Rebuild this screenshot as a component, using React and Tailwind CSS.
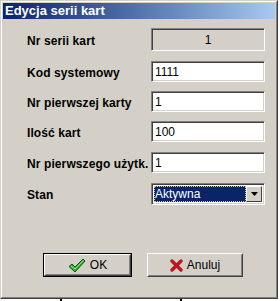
import React from "react";

const sunken =
  "border border-t-[#808080] border-l-[#808080] border-b-white border-r-white shadow-[inset_1px_1px_0_#404040,inset_-1px_-1px_0_#d4d0c8]";

function Row({ label, children, className = "" }) {
  return (
    <div className={`flex items-center ${className}`}>
      <div className="w-[148px] shrink-0 pl-[24px] pt-[2px] text-[12px] font-bold tracking-[0.1px] whitespace-nowrap text-black leading-none">
        {label}
      </div>
      {children}
    </div>
  );
}

function Field({ value }) {
  return (
    <div className={`w-[114px] h-[21px] bg-white ${sunken} flex items-center pl-[3px] text-[12px] text-black`}>
      {value}
    </div>
  );
}

function CheckIcon() {
  return (
    <svg width="18" height="15" viewBox="0 0 18 15">
      <path d="M1 8.5 L4 6 L7 9 L15 1 L17 3 L7 14 Z" fill="#2fae2f" stroke="#0d5a0d" strokeWidth="1" strokeLinejoin="round" />
      <path d="M3 8 L7 11 L15.5 2.5" fill="none" stroke="#8fe38f" strokeWidth="1" />
    </svg>
  );
}

function CrossIcon() {
  return (
    <svg width="13" height="13" viewBox="0 0 13 13">
      <path d="M2 2 L11 11 M11 2 L2 11" stroke="#c0141a" strokeWidth="3.4" strokeLinecap="round" />
    </svg>
  );
}

function Button({ children, isDefault, width }) {
  return (
    <div className={`${width} h-[24px] flex ${isDefault ? "border border-black" : ""}`}>
      <div className="flex-1 border border-t-white border-l-white border-b-[#404040] border-r-[#404040] flex">
        <div className="flex-1 border border-t-[#d4d0c8] border-l-[#d4d0c8] border-b-[#808080] border-r-[#808080] flex items-center justify-center gap-[4px] text-[12px] text-black">
          {children}
        </div>
      </div>
    </div>
  );
}

export default function App() {
  return (
    <div
      className="w-[280px] h-[301px] bg-white flex flex-col overflow-hidden"
      style={{ fontFamily: '"Liberation Sans", Arial, sans-serif' }}
    >
      <div className="flex">
        <div className="w-[278px] h-[299px] border border-t-[#d4d0c8] border-l-[#d4d0c8] border-b-[#404040] border-r-[#404040] bg-[#d4d0c8]">
          <div className="h-full border border-t-white border-l-white border-b-[#808080] border-r-[#808080] p-[1px] flex flex-col">
            <div className="h-[16px] bg-gradient-to-r from-[#0a246a] to-[#a6caf0] flex items-center pl-[2px] text-white font-bold text-[13px]">
              Edycja serii kart
            </div>

            <Row label="Nr serii kart" className="mt-[9px]">
              <div className={`w-[114px] h-[23px] bg-[#d4d0c8] ${sunken} flex items-center justify-center text-[12px] text-black`}>
                1
              </div>
            </Row>
            <Row label="Kod systemowy" className="mt-[10px]">
              <Field value="1111" />
            </Row>
            <Row label="Nr pierwszej karty" className="mt-[9px]">
              <Field value="1" />
            </Row>
            <Row label="Ilość kart" className="mt-[9px]">
              <Field value="100" />
            </Row>
            <Row label="Nr pierwszego użytk." className="mt-[10px]">
              <Field value="1" />
            </Row>
            <Row label="Stan" className="mt-[10px]">
              <div className={`w-[114px] h-[22px] bg-white ${sunken} flex items-center p-[2px]`}>
                <div className="flex-1 h-full bg-[#0a246a] outline-1 outline-dotted outline-[#d4c88a] -outline-offset-1 flex items-center pl-[1px] text-white text-[12px]">
                  Aktywna
                </div>
                <div className="w-[16px] h-full bg-[#d4d0c8] border border-t-white border-l-white border-b-[#404040] border-r-[#404040] flex items-center justify-center">
                  <svg width="7" height="4" viewBox="0 0 7 4">
                    <path d="M0 0 H7 L3.5 4 Z" fill="#000" />
                  </svg>
                </div>
              </div>
            </Row>

            <div className="flex mt-[48px] pl-[40px] gap-[15px]">
              <Button isDefault width="w-[89px]">
                <CheckIcon />
                <span>OK</span>
              </Button>
              <Button width="w-[96px]">
                <CrossIcon />
                <span>Anuluj</span>
              </Button>
            </div>
          </div>
        </div>
        <div className="w-[2px] bg-white" />
      </div>
      <div className="h-[2px] flex">
        <div className="w-[60px]" />
        <div className="w-[2px] bg-black" />
        <div className="w-[118px]" />
        <div className="w-[2px] bg-black" />
      </div>
    </div>
  );
}
